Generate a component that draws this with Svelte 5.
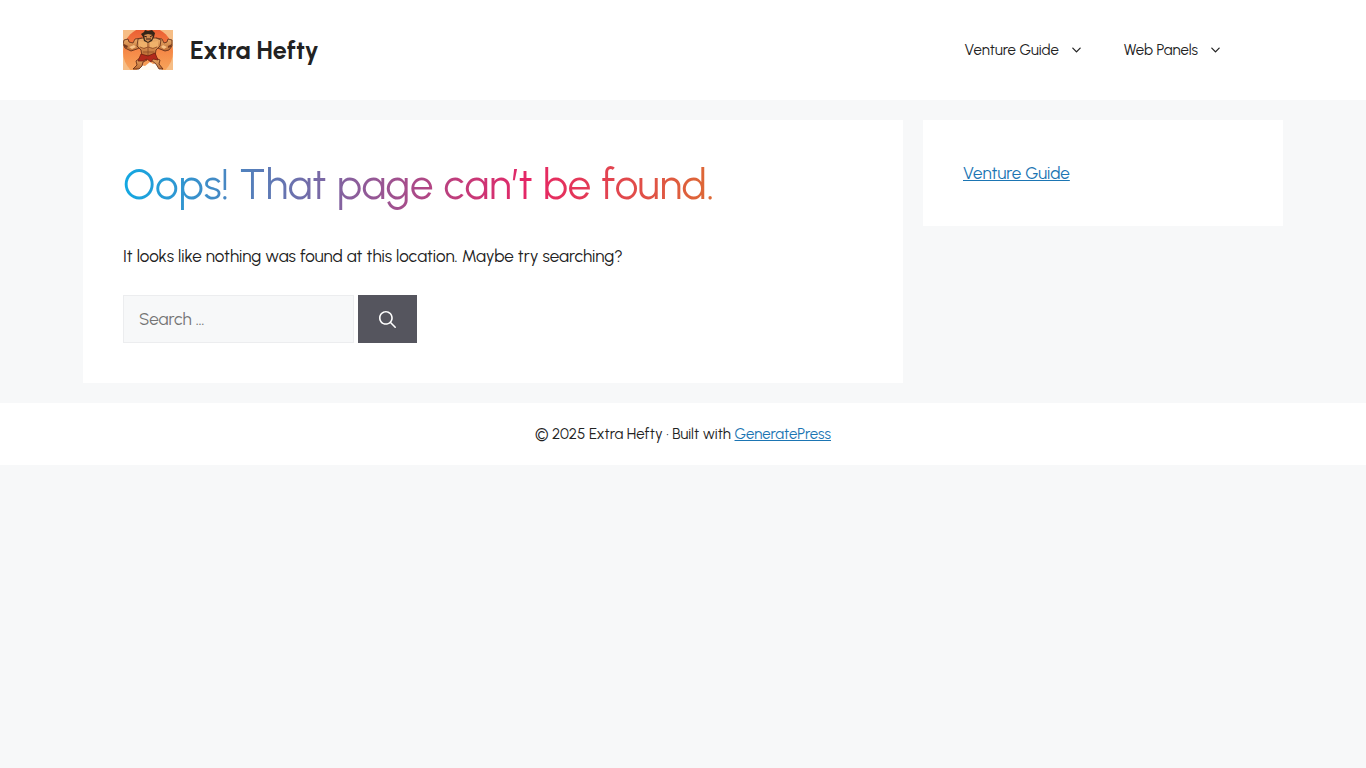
<script>
  const menu = ["Venture Guide", "Web Panels"];

  let query = "";
</script>

<header class="site-header">
  <div class="inside-header">
    <a class="branding" href="#home">
      <svg class="logo" viewBox="0 0 50 40" aria-hidden="true">
        <defs>
          <linearGradient id="sky" x1="0" y1="0" x2="0" y2="1">
            <stop offset="0" stop-color="#ea5930" />
            <stop offset="0.5" stop-color="#f58a48" />
            <stop offset="1" stop-color="#f8ae62" />
          </linearGradient>
          <linearGradient id="skin" x1="0" y1="0" x2="0" y2="1">
            <stop offset="0" stop-color="#edb06c" />
            <stop offset="1" stop-color="#bd6c34" />
          </linearGradient>
        </defs>
        <rect width="50" height="40" fill="#f6bd85" />
        <circle cx="25" cy="22" r="25" fill="url(#sky)" />
        <path d="M14 40 18 35 22 36 27 32 30 34 34 33 39 40Z" fill="#fffaf2" />
        <!-- legs -->
        <g fill="url(#skin)" stroke="#5a2413" stroke-width="0.8">
          <path d="M18 27 13 31 14 35 10 39 16 39 19 36 20 32 24 30Z" />
          <path d="M30 27 37 30 36 34 40 39 36 39 33 34 28 30Z" />
        </g>
        <!-- arms -->
        <g fill="url(#skin)" stroke="#5a2816" stroke-width="0.8">
          <path d="M19 8 12 9 10 13 6 12 5 9 1 10 0 14 2 18 8 21 14 19 18 17Z" />
          <path d="M33 8 39 9 41 13 44 12 45 9 49 10 49 16 46 20 42 21 37 19 33 17Z" />
        </g>
        <path d="M1 14 5 16 4 18 1 17ZM49 14 45 16 45 18 48 17Z" fill="#783b1f" />
        <path d="M6 17 11 15 13 17 9 19ZM44 17 40 15 38 17 41 19Z" fill="#f7c286" />
        <!-- torso -->
        <path
          d="M15 9 20 8 33 8 38 10 37 16 33 20 32 26 19 26 18 20 14 16Z"
          fill="url(#skin)"
          stroke="#5a2917"
          stroke-width="0.8"
        />
        <path d="M16 11 24 12 24 17 19 18 16 16ZM27 12 35 11 35 16 32 18 27 17Z" fill="#efb16a" />
        <path d="M25 13V25M17 17Q21 20 25 17Q30 20 34 17M20 22H31" fill="none" stroke="#8c4925" stroke-width="0.8" />
        <path d="M18 24 25 26 32 23 35 30 30 29 28 32 24 29 20 31 15 31Z" fill="#b22a1c" stroke="#74200f" stroke-width="0.8" />
        <!-- head -->
        <path d="M18 4 21 2 22 0 25 1 29 0 32 3 31 7 29 11 25 13 21 11 20 7Z" fill="#352417" />
        <path d="M21 5 25 4 30 5 29 9 25 12 22 10Z" fill="#d08b50" />
        <path d="M21 6 24 7M27 7 30 5M23 9 28 9" stroke="#3a1d13" />
      </svg>
      <span class="site-title">Extra Hefty</span>
    </a>
    <nav class="main-navigation" aria-label="Primary">
      {#each menu as item}
        <a href="#menu">
          {item}
          <svg class="arrow" viewBox="0 0 330 512" aria-hidden="true">
            <path
              d="M305.913 197.085c0 2.266-1.133 4.815-2.833 6.514L171.087 335.593c-1.7 1.7-4.249 2.832-6.515 2.832s-4.815-1.133-6.515-2.832L26.064 203.599c-1.7-1.7-2.832-4.248-2.832-6.514s1.132-4.816 2.832-6.515l14.162-14.163c1.7-1.699 3.966-2.832 6.515-2.832 2.266 0 4.815 1.133 6.515 2.832l111.316 111.317 111.316-111.317c1.7-1.699 4.249-2.832 6.515-2.832s4.815 1.133 6.515 2.832l14.162 14.163c1.7 1.7 2.833 4.249 2.833 6.515z"
            />
          </svg>
        </a>
      {/each}
    </nav>
  </div>
</header>

<div class="site-content">
  <main>
    <h1>Oops! That page can’t be found.</h1>
    <p>It looks like nothing was found at this location. Maybe try searching?</p>
    <form on:submit|preventDefault>
      <input type="search" placeholder="Search …" aria-label="Search for:" bind:value={query} />
      <button aria-label="Search">
        <svg viewBox="0 0 512 512" aria-hidden="true">
          <path
            fill-rule="evenodd"
            clip-rule="evenodd"
            d="M208 48c-88.366 0-160 71.634-160 160s71.634 160 160 160 160-71.634 160-160S296.366 48 208 48zM0 208C0 93.125 93.125 0 208 0s208 93.125 208 208c0 48.741-16.765 93.566-44.843 129.024l133.826 134.018c9.366 9.379 9.355 24.575-.025 33.941-9.379 9.366-24.575 9.355-33.941-.025L337.238 370.987C301.747 399.167 256.839 416 208 416 93.125 416 0 322.875 0 208z"
          />
        </svg>
      </button>
    </form>
  </main>
  <aside>
    <a href="#venture-guide">Venture Guide</a>
  </aside>
</div>

<footer>
  © 2025 Extra Hefty · Built with <a href="#generatepress">GeneratePress</a>
</footer>

<style>
  :global(body) {
    margin: 0;
    background-color: #f7f8f9;
    color: #222;
    font-family: Urbanist, Lato, sans-serif;
    font-size: 17px;
    line-height: 26px;
  }

  .site-header {
    background-color: #fff;
  }

  .inside-header {
    display: flex;
    align-items: center;
    justify-content: space-between;
    box-sizing: border-box;
    max-width: 1200px;
    margin: 0 auto;
    padding: 30px 40px;
  }

  .branding {
    display: flex;
    align-items: center;
    gap: 17px;
    color: #222;
    text-decoration: none;
  }

  .logo {
    width: 50px;
    height: 40px;
  }

  .site-title {
    font-size: 25px;
    font-weight: 700;
  }

  .main-navigation {
    display: flex;
  }

  .main-navigation a {
    display: flex;
    align-items: center;
    gap: 10px;
    padding: 0 20px;
    color: #222;
    font-size: 15px;
    text-decoration: none;
  }

  .arrow {
    width: 15px;
    height: 16px;
    fill: currentColor;
  }

  .site-content {
    display: grid;
    grid-template-columns: minmax(0, 1fr) 30%;
    gap: 20px;
    align-items: start;
    max-width: 1200px;
    margin: 20px auto;
  }

  main,
  aside {
    padding: 40px;
    background-color: #fff;
  }

  h1 {
    margin: 0;
    font-size: 42px;
    font-weight: 400;
    line-height: 50px;
    color: transparent;
    background: linear-gradient(90deg, #12a8e2, #e62565 55%, #dc7030 82%, #b0a040);
    background-clip: text;
  }

  p {
    margin: 33px 0 26px;
  }

  form {
    display: flex;
    gap: 4px;
  }

  input {
    box-sizing: border-box;
    width: 231px;
    height: 48px;
    padding: 10px 15px;
    border: 1px solid #ecedef;
    border-radius: 0;
    background-color: #f7f8f9;
    color: #666;
    font: inherit;
  }

  input::placeholder {
    color: #757575;
    opacity: 1;
  }

  button {
    display: flex;
    align-items: center;
    padding: 0 21px;
    border: 0;
    background-color: #55555e;
    color: #fff;
  }

  button svg {
    width: 17px;
    height: 17px;
    fill: currentColor;
  }

  aside a,
  footer a {
    color: #1b75b3;
  }

  footer {
    padding: 20px 40px;
    background-color: #fff;
    font-size: 15px;
    line-height: 22px;
    text-align: center;
  }
</style>
